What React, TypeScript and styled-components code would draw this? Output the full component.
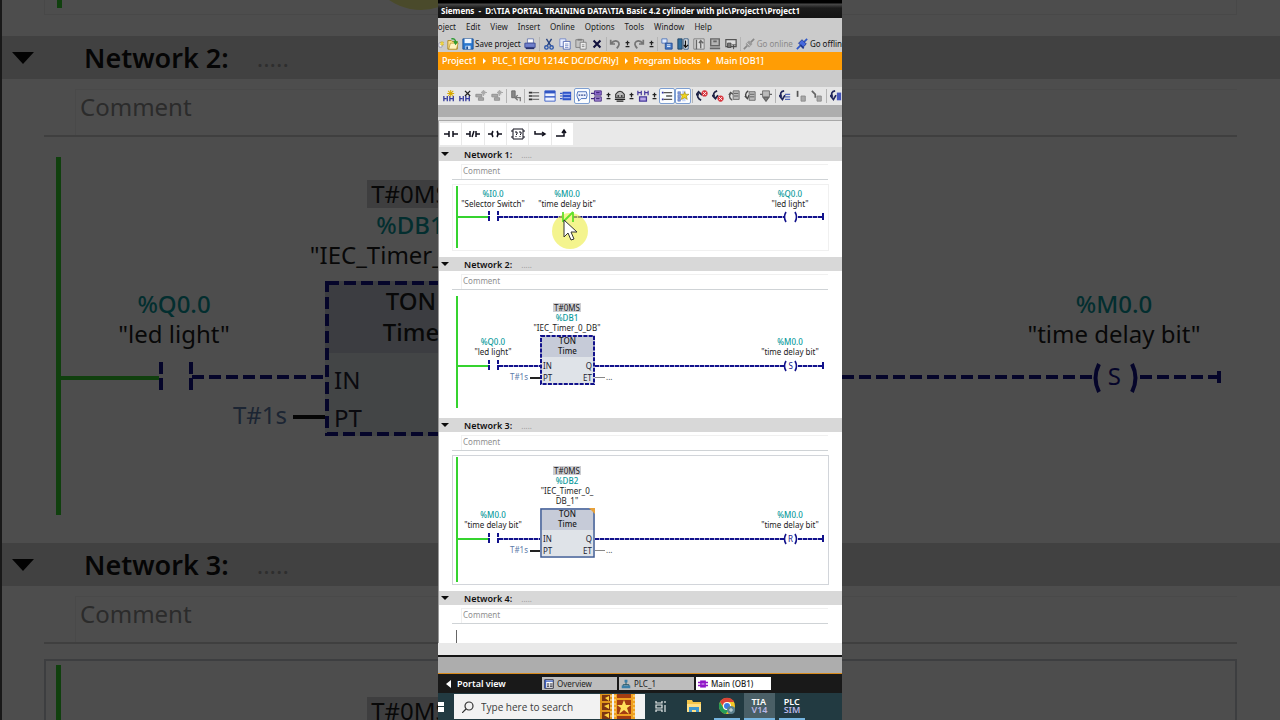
import React from "react";
import styled, { createGlobalStyle, css } from "styled-components";

const GlobalStyle = createGlobalStyle`
  *, *::before, *::after { box-sizing: border-box; }
  body {
    margin: 0;
    background: #000;
    font-family: "Noto Sans", "Open Sans", sans-serif;
    color: #1c1c1c;
  }
  button, input { font: inherit; color: inherit; border: 0; padding: 0; margin: 0; background: none; }
`;

const navy = "#12128c";
const green = "#35d32f";
const teal = "#0a9a9c";

/* ---------- page frame ---------- */

const Page = styled.div`
  display: grid;
  grid-template-columns: minmax(0, 1fr) minmax(404px, 30vw) minmax(0, 1fr);
  min-height: 100vh;
`;

const Backdrop = styled.aside<{ $edge?: boolean }>`
  display: flex;
  flex-direction: column;
  overflow: hidden;
  background: #fff;
  opacity: 0.3;
  ${(p) => p.$edge && css`border-left: 2px solid #555;`}
`;

const Screen = styled.main`
  display: flex;
  flex-direction: column;
  min-width: 0;
  overflow: hidden;
  background: #e9e9e9;
`;

/* ---------- top bars ---------- */

const TitleBar = styled.header`
  height: 18px;
  padding: 4px 3px 0;
  background: linear-gradient(#000 0 3px, #4a4a4a 4px, #1b1b1b 8px, #141414);
  color: #fff;
  font-size: 8px;
  line-height: 14px;
  font-weight: 700;
  white-space: pre;
`;

const MenuBar = styled.nav`
  display: flex;
  align-items: center;
  gap: 10px;
  height: 18px;
  background: #cbcbcb;
  font-size: 8px;
  line-height: 12px;
`;

const MenuItem = styled.button<{ $clipped?: boolean }>`
  ${(p) => p.$clipped && css`
    display: flex;
    justify-content: flex-end;
    width: 18px;
    overflow: hidden;
  `}
`;

const ToolBar = styled.div<{ $light?: boolean }>`
  display: flex;
  align-items: center;
  height: ${(p) => (p.$light ? 18 : 16)}px;
  padding-left: ${(p) => (p.$light ? 3 : 0)}px;
  overflow: hidden;
  background: ${(p) => (p.$light ? "#e6e6e6" : "#cbcbcb")};
`;

const ToolButton = styled.button<{ $w?: number; $active?: boolean }>`
  display: flex;
  flex: none;
  align-items: center;
  justify-content: center;
  width: ${(p) => p.$w ?? 16}px;
  height: 16px;
  overflow: hidden;
  ${(p) => p.$active && css`
    background: #fbfdff;
    border: 1px solid #7d9fd2;
    border-radius: 2px;
  `}
`;

const ToolText = styled.button<{ $muted?: boolean }>`
  flex: none;
  padding: 0 2px 0 1px;
  font-size: 8px;
  line-height: 14px;
  white-space: nowrap;
  color: ${(p) => (p.$muted ? "#8a8a8a" : "#111")};
`;

const Divider = styled.span`
  flex: none;
  width: 1px;
  height: 14px;
  margin: 0 1px;
  background: #b4b4b4;
`;

const Breadcrumb = styled.nav`
  display: flex;
  align-items: center;
  gap: 6px;
  height: 18px;
  padding-left: 4px;
  background: #ff9d05;
  color: #fff;
  font-size: 9px;
  line-height: 16px;
  font-weight: 500;
  a { color: inherit; text-decoration: none; white-space: nowrap; }
`;

const Strip = styled.div<{ $h: number; $bg: string }>`
  flex: none;
  height: ${(p) => p.$h}px;
  background: ${(p) => p.$bg};
`;

const Favourites = styled.div`
  display: flex;
  gap: 1px;
  width: 135px;
  height: 26px;
  padding: 2px 0 2px 1px;
  border-left: 1px solid #999;
`;

const Favourite = styled.button`
  display: flex;
  flex: 1;
  align-items: center;
  justify-content: center;
  background: #fff;
`;

/* ---------- networks ---------- */

const Networks = styled.div`
  flex: 1;
  background: #fff;
  border-left: 1px solid #999;
`;

const NetworkHead = styled.h2<{ $big?: boolean }>`
  display: flex;
  flex: none;
  align-items: center;
  margin: 0;
  white-space: nowrap;
  font-weight: 600;
  background: #d8d8d8;
  color: #111;
  ${(p) => p.$big
    ? css`height: 43px; padding-left: 10px; font-size: 27px; line-height: 40px;`
    : css`height: 14px; padding-left: 2px; font-size: 9px; line-height: 13px;`}
`;

const NetworkTitle = styled.span<{ $big?: boolean }>`
  margin-left: ${(p) => (p.$big ? 50 : 15)}px;
`;

const NetworkDots = styled.span<{ $big?: boolean }>`
  margin-left: ${(p) => (p.$big ? 28 : 9)}px;
  font-weight: 400;
  color: #999;
  font-size: ${(p) => (p.$big ? 24 : 8)}px;
`;

const CommentRow = styled.div<{ $big?: boolean; $side?: "left" | "right" }>`
  flex: none;
  border-bottom: 1px solid #cfd3d6;
  ${(p) => p.$big
    ? css`
        height: 58px;
        padding: 10px 0 0 ${p.$side === "left" ? 31 : 0}px;
        margin: 0 ${p.$side === "right" ? 43 : 0}px 15px ${p.$side === "left" ? 42 : 0}px;
        border-bottom: 2px solid #cfcfd2;
      `
    : css`height: 19px; padding: 3px 0 0 9px; margin: 0 14px 4px 13px;`}
`;

const CommentInput = styled.input<{ $big?: boolean }>`
  display: block;
  width: 100%;
  border-top: 1px solid #f0f0f0;
  border-left: 1px solid #f0f0f0;
  ${(p) => p.$big
    ? css`height: 46px; padding: 0 0 12px 4px; font-size: 24px;`
    : css`height: 15px; padding: 0 0 4px 1px; font-size: 8px;`}
  &::placeholder { color: #8f8f8f; opacity: 1; }
`;

const Canvas = styled.div<{ $h?: number; $m: string; $line?: string; $sides?: string }>`
  position: relative;
  flex: none;
  height: ${(p) => (p.$h ? `${p.$h}px` : "auto")};
  ${(p) => !p.$h && css`flex: 1 0 61px;`}
  margin: ${(p) => p.$m};
  border: 0 solid ${(p) => p.$line ?? "transparent"};
  border-width: ${(p) => p.$sides ?? "1px"};
`;

type Place = { $x?: number; $r?: number; $y: number };

const place = css<Place>`
  position: absolute;
  top: ${(p) => p.$y}px;
  ${(p) => p.$x !== undefined && css`left: ${p.$x}px;`}
  ${(p) => p.$r !== undefined && css`right: ${p.$r}px;`}
`;

const Bar = styled.i<Place & { $w?: number; $h: number; $c?: string }>`
  ${place}
  ${(p) => p.$w !== undefined && css`width: ${p.$w}px;`}
  height: ${(p) => p.$h}px;
  background: ${(p) => p.$c ?? navy};
`;

const Wire = styled.i<Place & { $w?: number; $big?: boolean }>`
  ${place}
  ${(p) => p.$w !== undefined && css`width: ${p.$w}px;`}
  height: ${(p) => (p.$big ? 4 : 2)}px;
  background: ${(p) => p.$big
    ? `repeating-linear-gradient(90deg, ${navy} 0 12px, transparent 12px 17px)`
    : `repeating-linear-gradient(90deg, ${navy} 0 4px, #a9a9d6 4px 5px)`};
`;

const Label = styled.div<Place & { $w: number; $big?: boolean }>`
  ${place}
  display: flex;
  flex-direction: column;
  align-items: center;
  width: ${(p) => p.$w}px;
  white-space: nowrap;
  font-size: ${(p) => (p.$big ? 24 : 8)}px;
  line-height: ${(p) => (p.$big ? 30 : 10)}px;
`;

const Address = styled.span`
  color: ${teal};
  font-weight: 500;
`;

const Chip = styled.span<{ $big?: boolean }>`
  padding: 0 ${(p) => (p.$big ? 4 : 1)}px;
  line-height: ${(p) => (p.$big ? 28 : 9)}px;
  margin-bottom: ${(p) => (p.$big ? 2 : 1)}px;
  background: #cdcdd1;
`;

const Pin = styled.span<Place & { $big?: boolean; $c?: string }>`
  ${place}
  font-size: ${(p) => (p.$big ? 24 : 8)}px;
  line-height: ${(p) => (p.$big ? 30 : 10)}px;
  white-space: nowrap;
  color: ${(p) => p.$c ?? "#223"};
`;

const Block = styled.div<Place & { $big?: boolean }>`
  ${place}
  width: ${(p) => (p.$big ? 172 : 55)}px;
  height: ${(p) => (p.$big ? 155 : 50)}px;
  background: #dfe3e8;
  svg { position: absolute; inset: 0; width: 100%; height: 100%; }
`;

const BlockHead = styled.div<{ $big?: boolean }>`
  height: ${(p) => (p.$big ? 72 : 22)}px;
  padding-top: ${(p) => (p.$big ? 4 : 1)}px;
  background: #c6cbd8;
  text-align: center;
  font-weight: 500;
  font-size: ${(p) => (p.$big ? 24 : 8)}px;
  line-height: ${(p) => (p.$big ? 31 : 10)}px;
`;

const CoilSvg = styled.svg<Place>`
  ${place}
  overflow: visible;
`;

const Pointer = styled.svg<Place>`
  ${place}
`;

/* ---------- bottom bars ---------- */

const PortalBar = styled.div`
  display: flex;
  align-items: center;
  flex: none;
  height: 20px;
  border-top: 1px solid #d88a1c;
  background: #191919;
`;

const PortalButton = styled.button`
  display: flex;
  align-items: center;
  gap: 6px;
  width: 104px;
  padding-left: 8px;
  color: #fff;
  font-size: 9px;
  font-weight: 600;
  line-height: 14px;
`;

const EditorTab = styled.button<{ $active?: boolean }>`
  display: flex;
  align-items: center;
  gap: 3px;
  width: 75px;
  height: 13px;
  margin-right: 2px;
  padding-left: 2px;
  font-size: 8px;
  line-height: 12px;
  background: ${(p) => (p.$active ? "#fff" : "#bdbdbd")};
  font-weight: ${(p) => (p.$active ? 500 : 400)};
`;

const TaskBar = styled.footer`
  display: flex;
  flex: none;
  height: 27px;
  background: #223a41;
`;

const StartButton = styled.button`
  display: flex;
  align-items: center;
  width: 16px;
`;

const SearchBox = styled.label`
  display: flex;
  align-items: center;
  width: 191px;
  height: 25px;
  margin: 1px 3px 0 0;
  padding-left: 8px;
  background: #f2f2f2;
  input {
    flex: 1;
    min-width: 0;
    margin-left: 7px;
    font-family: "Open Sans", "Noto Sans", sans-serif;
    font-size: 10px;
    color: #333;
  }
  input::placeholder { color: #3c3c3c; opacity: 1; }
`;

const FilmSvg = styled.svg`
  flex: none;
  margin-right: 8px;
`;

const TaskButton = styled.button<{ $open?: boolean; $active?: boolean; $w: number }>`
  display: flex;
  align-items: center;
  justify-content: center;
  width: ${(p) => p.$w}px;
  margin-right: 4px;
  background: ${(p) => (p.$active ? "#4a5f66" : "transparent")};
  border-bottom: 2px solid ${(p) => (p.$open ? "#76b5e0" : "transparent")};
  color: #fff;
`;

const TileName = styled.span<{ $soft?: boolean }>`
  display: block;
  height: 8px;
  font-size: 9px;
  font-weight: 600;
  line-height: 8px;
  text-align: left;
  color: ${(p) => (p.$soft ? "#b9b7e6" : "#fff")};
`;

/* ---------- icons ---------- */

const G = "#7b7b7b";
const art: Record<string, React.ReactNode> = {
  star: <><path d="M2 5h6v8H2z" fill="#fff" stroke="#668" /><path d="M8 1l1 3 3-1-2 3 2 3-3-1-1 3-1-3-3 1 2-3-2-3 3 1z" fill="#ffe23a" stroke="#b69500" strokeWidth=".5" /></>,
  open: <><path d="M1 3h4l1 1h6v9H1z" fill="#ffe28a" stroke="#a98218" /><path d="M2 13l2-7h9l-2 7z" fill="#fff3bf" stroke="#a98218" strokeWidth=".7" /><path d="M5 1q5-1 5 4M8 4l2 3 2-3" fill="none" stroke="#2c9b31" strokeWidth="1.6" /></>,
  save: <><path d="M1 1h12v12H1z" fill="#2a78cf" stroke="#1a4e94" /><path d="M3 1h8v5H3z" fill="#eef6ff" /><path d="M4 9h6v4H4z" fill="#cfe3fa" /><path d="M5 10h2v3H5z" fill="#1a4e94" /></>,
  print: <><path d="M4 1h7v5H4z" fill="#fff" stroke="#6677b0" /><path d="M1 6h12v5H1z" fill="#6f80cc" stroke="#3b4992" /><path d="M2 12h10" stroke="#26306d" strokeWidth="2" /></>,
  cut: <><path d="M4 1l5 8M10 1L5 9" stroke="#26427f" strokeWidth="1.6" /><circle cx="4" cy="11" r="2" fill="none" stroke="#2b55a9" strokeWidth="1.6" /><circle cx="10" cy="11" r="2" fill="none" stroke="#2b55a9" strokeWidth="1.6" /></>,
  copy: <><path d="M1 1h7v9H1z" fill="#e8eeff" stroke="#6d83c4" /><path d="M5 4h8v9H5z" fill="#fff" stroke="#4c63ad" /><path d="M7 7h4M7 9h4M7 11h4" stroke="#6d83c4" /></>,
  paste: <><path d="M1 2h9v9H1z" fill="#c3c3c3" stroke={G} /><path d="M3 1h5v2H3z" fill={G} /><path d="M6 5h7v8H6z" fill="#eee" stroke={G} /><path d="M8 8h3M8 10h3" stroke={G} /></>,
  del: <path d="M3 3l8 8M11 3L3 11" stroke="#10103c" strokeWidth="2.4" />,
  undo: <path d="M2 2v5h5M2 7q4-5 8-3 4 3-1 8" fill="none" stroke="#747474" strokeWidth="2" />,
  redo: <path d="M12 2v5H7M12 7Q8 2 4 4q-4 3 1 8" fill="none" stroke="#747474" strokeWidth="2" />,
  compile: <><path d="M1 1h6v5H1z" fill="#dfeaff" stroke="#4a70b8" /><path d="M5 6h8v7H5z" fill="#4577c4" stroke="#244c92" /><path d="M7 8h4M7 10h4" stroke="#fff" /></>,
  down: <><path d="M1 1h5v12H1z" fill="#2f6e9e" stroke="#1d3d60" /><path d="M8 1h5v12H8z" fill="#f4f4f4" stroke="#25507b" /><path d="M10 3v7M8 8l2 3 3-3" fill="none" stroke="#111" strokeWidth="1.4" /></>,
  up: <><path d="M1 1h12v12H1z" fill="#dcdcdc" stroke="#777" /><path d="M4 2v11M9 12V4M7 6l2-3 3 3" fill="none" stroke="#666" strokeWidth="1.6" /></>,
  monitor: <><path d="M2 1h10v8H2z" fill="#b5b5b5" stroke="#666" strokeWidth="1.6" /><path d="M5 4h4M1 12h12" stroke="#666" strokeWidth="2" /></>,
  runtime: <><path d="M1 2h12v8H1z" fill="#ddd" stroke="#555" strokeWidth="1.4" /><path d="M3 6h4v5H3zM8 8h5M10 8v5" fill="#777" stroke="#444" /></>,
  plugOff: <><path d="M1 13l4-4M9 5l4-4" stroke="#888" strokeWidth="2" /><path d="M3 7l4-4 4 4-4 4z" fill="#999" /><path d="M5 6l3 3" stroke="#ddd" /></>,
  plugOn: <><path d="M1 13l4-4M9 5l4-4" stroke="#2d57c8" strokeWidth="2" /><path d="M3 6l4-4 5 5-4 4z" fill="#4568dd" stroke="#1f388f" /><path d="M5 8l4 4" stroke="#1f388f" strokeWidth="2" /></>,
  netAdd: <><path d="M1 7v6M1 10h3M5 7v6M8 7v6M8 10h4M12 7v6" stroke="#333a9b" strokeWidth="1.5" fill="none" /><path d="M9 0v8M5 4h8M6 1l6 6M12 1L6 7" stroke="#d7a900" strokeWidth="1.2" /></>,
  netDel: <><path d="M1 7v6M1 10h3M5 7v6M8 7v6M8 10h4M12 7v6" stroke="#333a9b" strokeWidth="1.5" fill="none" /><path d="M7 1l6 6M13 1L7 7" stroke="#222" strokeWidth="1.5" /></>,
  rowAdd: <><path d="M1 5h7v3H1zM4 9h6v3H4z" fill="#a8a8a8" stroke="#8c8c8c" /><path d="M10 0v7M7 3h7M8 1l4 4M12 1L8 5" stroke="#aaa" strokeWidth="1.2" /></>,
  jump: <><path d="M2 1h4v8H2z" fill="#888" stroke="#666" /><path d="M6 9h6v4M6 9l3-3M6 9l3 3" stroke="#777" fill="none" strokeWidth="1.5" /></>,
  list: <><path d="M1 3h4M1 7h4M1 11h4" stroke="#333" strokeWidth="2" /><path d="M5 3h8M5 7h8M5 11h8" stroke="#777" strokeWidth="1.5" /></>,
  panel: <><path d="M1 1h12v12H1z" fill="#eef3ff" stroke="#3156c4" /><path d="M1 1h12v3H1z" fill="#3156c4" /><path d="M1 8h12" stroke="#3156c4" strokeWidth="1.6" /></>,
  rows: <><path d="M0 4h3M0 7h3M0 10h3" stroke="#3156c4" strokeWidth="1.4" /><path d="M3 2h10v10H3z" fill="#2f55c9" /><path d="M4 5h8M4 9h8" stroke="#cbd7ff" /></>,
  bubble: <><path d="M2 2h10q2 4 0 8H6l-3 3v-3H2q-2-4 0-8z" fill="#eef4ff" stroke="#3a63b4" /><path d="M3 6h2M6 6h2M9 6h2" stroke="#273e86" strokeWidth="1.6" /></>,
  operand: <><path d="M4 1h8v5H4z" fill="#9470d2" stroke="#41287c" /><path d="M4 8h8v5H4z" fill="#a78bd8" stroke="#41287c" /><path d="M0 4h4M0 10h4M6 3h4M6 10h4" stroke="#41287c" strokeWidth="1.5" /></>,
  symbol: <><path d="M2 5q5-7 10 0v4H2z" fill="#bbb" stroke="#333" strokeWidth="1.3" /><path d="M1 11h12M4 7h2M8 7h2M3 13h8" stroke="#222" strokeWidth="1.6" /></>,
  branch: <><path d="M1 1v5M1 3h4M5 1v5M9 1v5M9 3h4M13 1v5" stroke="#473a9b" strokeWidth="1.4" /><path d="M3 8h8v5H3z" fill="#b7a6e6" stroke="#473a9b" strokeWidth="1.5" /></>,
  indent: <><path d="M1 3h2M1 11h2" stroke="#33a" strokeWidth="2" /><path d="M3 3h10M6 7h7M3 11h10" stroke="#555" strokeWidth="1.5" /></>,
  favs: <><path d="M1 2h3v3H1zM1 6h3v3H1zM1 10h3v3H1z" fill="#8aa1dc" stroke="#4463b3" strokeWidth=".6" /><path d="M6 1h4v12H6z" fill="#c9d6f7" /><path d="M9 2l1 3 4 0-3 2 1 4-3-2-4 2 1-4-2-2h4z" fill="#f2d61e" stroke="#917c00" strokeWidth=".6" /></>,
  errPrev: <><path d="M6 12Q0 9 3 4M0 6l3-4 4 4" fill="none" stroke="#1c2144" strokeWidth="2" /><circle cx="10" cy="4" r="3.6" fill="#d7323b" /><path d="M8 2l4 4M12 2L8 6" stroke="#fff" /></>,
  errNext: <><path d="M6 1Q0 3 3 8M0 6l4 4 3-4" fill="none" stroke="#1c2144" strokeWidth="2" /><circle cx="10" cy="10" r="3.6" fill="#d7323b" /><path d="M8 8l4 4M12 8l-4 4" stroke="#fff" /></>,
  refPrev: <><path d="M5 12Q0 9 3 4M1 6l2-3 3 2" fill="none" stroke="#555" strokeWidth="1.6" /><path d="M6 1h7v10H6z" fill="#bbb" stroke="#666" /><path d="M7 4h5M7 7h5" stroke="#555" /></>,
  refNext: <><path d="M5 1Q0 4 3 9M1 7l3 3 2-4" fill="none" stroke="#444" strokeWidth="1.6" /><path d="M6 2h7v10H6z" fill="#bbb" stroke="#666" /><path d="M7 5h5M7 8h5" stroke="#555" /></>,
  sync: <><path d="M3 1h8v7H3z" fill="#bbb" stroke="#666" /><path d="M0 5h3M11 5h3M4 9l3 4 3-4z" stroke="#666" fill="#888" strokeWidth="1.5" /></>,
  goto: <><path d="M6 1Q0 2 3 8M0 6l4 5 3-5" fill="none" stroke="#20265c" strokeWidth="2" /><path d="M7 5h6M7 8h6M7 11h6" stroke="#5468b8" strokeWidth="1.5" /></>,
  stepA: <><path d="M3 1v7" stroke="#555" strokeWidth="2" /><path d="M7 7h5v6H7z" fill="#aaa" stroke="#888" /></>,
  stepB: <><path d="M1 1l4 4v4" stroke="#666" strokeWidth="2" fill="none" /><path d="M7 7h5v6H7z" fill="#aaa" stroke="#888" /></>,
  watch: <><path d="M6 1Q0 2 3 8M0 6l4 5 3-5" fill="none" stroke="#20265c" strokeWidth="2" /><path d="M8 3h5v9H8z" fill="#4757bb" /></>,
  updown: <path d="M7 2v7M4 5h6M4 11h6" stroke="#222" strokeWidth="2" fill="none" />,
};

const Icon = ({ name, size = 11 }: { name: string; size?: number }) => (
  <svg width={size} height={size} viewBox="0 0 14 14" fill="none" aria-hidden>{art[name]}</svg>
);

const Tool = ({ name, w, active }: { name: string; w?: number; active?: boolean }) => (
  <ToolButton $w={w} $active={active} aria-label={name}><Icon name={name} size={12} /></ToolButton>
);

const Chevron = () => <svg width="3" height="6" viewBox="0 0 3 6" aria-hidden><path d="M0 0l3 3-3 3z" fill="#fff" /></svg>;

const Triangle = ({ big }: { big?: boolean }) => (
  <svg width={big ? 22 : 8} height={big ? 12 : 4} viewBox="0 0 22 12" preserveAspectRatio="none" aria-hidden>
    <path d="M0 0h22L11 12z" fill="#0b0b0b" />
  </svg>
);

/* ---------- ladder parts ---------- */

const quoted = (s: string) => `"${s}"`;

function Tag({ x, r, y, address, name, big }: { x?: number; r?: number; y: number; address: string; name: string; big?: boolean }) {
  return (
    <Label $x={x} $r={r} $y={y} $w={big ? 220 : 76} $big={big}>
      <Address>{address}</Address>
      <span>{quoted(name)}</span>
    </Label>
  );
}

function Contact({ x, y }: { x: number; y: number }) {
  return (
    <>
      <Bar $x={x} $y={y - 5} $w={2} $h={4} /><Bar $x={x} $y={y} $w={2} $h={5} />
      <Bar $x={x + 9} $y={y - 5} $w={2} $h={4} /><Bar $x={x + 9} $y={y} $w={2} $h={5} />
    </>
  );
}

function Coil({ y, letter }: { y: number; letter?: string }) {
  return (
    <>
      <CoilSvg $r={29} $y={y - 4} width="16" height="10" viewBox="0 0 16 10" fill="none" stroke={navy} strokeWidth="1.6">
        <path d="M3 0Q0 5 3 10M12 0q3 5 0 10" />
      </CoilSvg>
      {letter && <Pin $r={35} $y={y - 4} $c={navy}>{letter}</Pin>}
      <Wire $r={5} $y={y} $w={25} />
      <Bar $r={4} $y={y - 3} $w={2} $h={7} />
    </>
  );
}

function Timer({ y, db, names, selected }: { y: number; db: string; names: string[]; selected?: boolean }) {
  return (
    <>
      <Label $x={73} $y={y - 52 - names.length * 10} $w={82}>
        <Chip>T#0MS</Chip>
        <Address>{db}</Address>
        {names.map((n) => <span key={n}>{n}</span>)}
      </Label>
      <Block $x={87} $y={y - 30}>
        <BlockHead>TON<br />Time</BlockHead>
        <svg aria-hidden>
          <rect x="1" y="1" width="53" height="48" fill="none" stroke={selected ? "#3c5a96" : navy}
            strokeWidth={selected ? 1.4 : 2} strokeDasharray={selected ? undefined : "4 1.3"} />
          {selected && <path d="M49 0h6v6z" fill="#e7a13a" />}
        </svg>
        <Pin $x={3} $y={26}>IN</Pin>
        <Pin $x={3} $y={38}>PT</Pin>
        <Pin $r={3} $y={26}>Q</Pin>
        <Pin $r={3} $y={38}>ET</Pin>
      </Block>
      <Pin $x={57} $y={y + 7} $c="#5c7aa8">T#1s</Pin>
      <Bar $x={77} $y={y + 12} $w={10} $h={2} $c="#222" />
      <Bar $x={142} $y={y + 12} $w={10} $h={1} $c="#888" />
      <Pin $x={153} $y={y + 7} $c="#444">...</Pin>
    </>
  );
}

function Network({ n, children, h, line }: { n: number; children: React.ReactNode; h: number; line?: string }) {
  return (
    <section>
      <NetworkHead><Triangle /><NetworkTitle>{`Network ${n}:`}</NetworkTitle><NetworkDots>.....</NetworkDots></NetworkHead>
      <CommentRow><CommentInput placeholder="Comment" aria-label={`Network ${n} comment`} /></CommentRow>
      <Canvas $h={h} $m="0 13px 6px 13px" $line={line}>{children}</Canvas>
    </section>
  );
}

function PowerRail({ y, h }: { y: number; h: number }) {
  return (
    <>
      <Bar $x={3} $y={1} $w={2} $h={h} $c={green} />
      <Bar $x={5} $y={y} $w={30} $h={2} $c={green} />
    </>
  );
}

function LadderEditor() {
  return (
    <Networks>
      <Network n={1} h={67} line="#f0f0f0">
        <PowerRail y={31} h={62} />
        <Tag x={2} y={4} address="%I0.0" name="Selector Switch" />
        <Contact x={35} y={31} />
        <Wire $x={46} $y={31} $w={63} />
        <Tag x={76} y={4} address="%M0.0" name="time delay bit" />
        <Wire $x={120} $y={31} $r={43} />
        <Pointer $x={98} $y={25} width="37" height="40" viewBox="0 0 37 40" aria-hidden>
          <circle cx="19" cy="21" r="18" fill="#eeee48" opacity=".62" />
          <path d="M12 2v10M22 2v10M12 12l10-10" stroke="#62e02a" strokeWidth="1.8" fill="none" />
          <path d="M13 10v17l4-4 3 7 3-1-3-7h6z" fill="#fff" stroke="#333" strokeWidth="1" />
        </Pointer>
        <Tag r={0} y={4} address="%Q0.0" name="led light" />
        <Coil y={31} />
      </Network>
      <Network n={2} h={118}>
        <PowerRail y={70} h={112} />
        <Tag x={2} y={42} address="%Q0.0" name="led light" />
        <Contact x={35} y={70} />
        <Wire $x={46} $y={70} $w={41} />
        <Timer y={70} db="%DB1" names={[quoted("IEC_Timer_0_DB")]} />
        <Wire $x={142} $y={70} $r={43} />
        <Tag r={0} y={42} address="%M0.0" name="time delay bit" />
        <Coil y={70} letter="S" />
      </Network>
      <Network n={3} h={130} line="#d2d5da">
        <PowerRail y={82} h={125} />
        <Tag x={2} y={54} address="%M0.0" name="time delay bit" />
        <Contact x={35} y={82} />
        <Wire $x={46} $y={82} $w={41} />
        <Timer y={82} db="%DB2" names={['"IEC_Timer_0_', 'DB_1"']} selected />
        <Wire $x={142} $y={82} $r={43} />
        <Tag r={0} y={54} address="%M0.0" name="time delay bit" />
        <Coil y={82} letter="R" />
      </Network>
      <section>
        <NetworkHead><Triangle /><NetworkTitle>Network 4:</NetworkTitle><NetworkDots>.....</NetworkDots></NetworkHead>
        <CommentRow><CommentInput placeholder="Comment" aria-label="Network 4 comment" /></CommentRow>
        <Canvas $h={15} $m="0 13px"><Bar $x={3} $y={1} $w={1} $h={13} $c="#666" /></Canvas>
      </section>
    </Networks>
  );
}

/* ---------- enlarged backdrops ---------- */

function BackdropLeft() {
  return (
    <Backdrop $edge aria-hidden>
      <Canvas $h={15} $m="0 0 21px 42px" $line="#eee" $sides="0 0 1px 1px">
        <Bar $x={12} $y={0} $w={5} $h={8} $c={green} />
        <Pointer $x={319} $y={0} width="114" height="12" viewBox="0 102 114 12"><circle cx="57" cy="56" r="56" fill="#eeee48" opacity=".62" /></Pointer>
      </Canvas>
      <NetworkHead $big><Triangle big /><NetworkTitle $big>Network 2:</NetworkTitle><NetworkDots $big>.....</NetworkDots></NetworkHead>
      <CommentRow $big $side="left"><CommentInput $big placeholder="Comment" /></CommentRow>
      <Canvas $h={374} $m="0 0 17px 42px" $sides="0">
        <Bar $x={12} $y={5} $w={5} $h={358} $c={green} />
        <Bar $x={17} $y={224} $w={98} $h={4} $c={green} />
        <Tag big x={20} y={137} address="%Q0.0" name="led light" />
        <Bar $x={115} $y={210} $w={4} $h={12} /><Bar $x={115} $y={226} $w={4} $h={12} />
        <Bar $x={145} $y={210} $w={4} $h={12} /><Bar $x={145} $y={226} $w={4} $h={12} />
        <Wire $big $x={148} $y={223} $w={133} />
        <Label $big $x={256} $y={28} $w={220}>
          <Chip $big>T#0MS</Chip>
          <Address>%DB1</Address>
          <span>{quoted("IEC_Timer_0_DB")}</span>
        </Label>
        <Block $big $x={281} $y={129}>
          <BlockHead $big>TON<br />Time</BlockHead>
          <svg><rect x="2" y="2" width="168" height="151" fill="none" stroke={navy} strokeWidth="4" strokeDasharray="12 5" /></svg>
          <Pin $big $x={9} $y={84}>IN</Pin>
          <Pin $big $x={9} $y={122}>PT</Pin>
        </Block>
        <Pin $big $x={189} $y={248} $c="#5c7aa8">T#1s</Pin>
        <Bar $x={249} $y={263} $w={32} $h={4} $c="#111" />
      </Canvas>
      <NetworkHead $big><Triangle big /><NetworkTitle $big>Network 3:</NetworkTitle><NetworkDots $big>.....</NetworkDots></NetworkHead>
      <CommentRow $big $side="left"><CommentInput $big placeholder="Comment" /></CommentRow>
      <Canvas $m="0 0 0 42px" $line="#c9ccd4" $sides="2px 0 0 2px">
        <Bar $x={10} $y={4} $w={5} $h={56} $c={green} />
        <Label $big $x={254} $y={36} $w={220}><Chip $big>T#0MS</Chip></Label>
      </Canvas>
    </Backdrop>
  );
}

function BackdropRight() {
  return (
    <Backdrop aria-hidden>
      <Canvas $h={15} $m="0 43px 21px 0" $line="#eee" $sides="0 1px 1px 0" />
      <NetworkHead $big />
      <CommentRow $big $side="right"><CommentInput $big /></CommentRow>
      <Canvas $h={374} $m="0 43px 17px 0" $sides="0">
        <Tag big r={13} y={137} address="%M0.0" name="time delay bit" />
        <Wire $big $x={0} $y={223} $r={145} />
        <CoilSvg $r={98} $y={211} width="46" height="30" viewBox="0 0 46 30" fill="none" stroke={navy} strokeWidth="4">
          <path d="M6 1Q-1 15 6 29M39 1q7 14 0 28" />
        </CoilSvg>
        <Pin $big $r={116} $y={209} $c={navy}>S</Pin>
        <Wire $big $r={19} $y={223} $w={78} />
        <Bar $r={16} $y={219} $w={4} $h={12} />
      </Canvas>
      <NetworkHead $big />
      <CommentRow $big $side="right"><CommentInput $big /></CommentRow>
      <Canvas $m="0 43px 0 0" $line="#c9ccd4" $sides="2px 2px 0 0" />
    </Backdrop>
  );
}

/* ---------- application ---------- */

const favourites = [
  <path d="M0 6h5M5 3v6M9 3v6M9 6h5" />,
  <path d="M0 6h4M4 3v6M10 3v6M10 6h4M6 9l2-6" />,
  <path d="M0 6h4M5 3q-2 3 0 6M9 3q2 3 0 6M10 6h4" />,
  <><path d="M2 1h10v10H2zM0 3h2M0 9h2M12 3h2M12 9h2" strokeWidth="1" /><path d="M4 4h2v2l-1 1M5 8v1M8 4h2v2l-1 1M9 8v1" strokeWidth="1" /></>,
  <path d="M2 3v3h9M9 4l3 2-3 2" />,
  <path d="M1 8h8V3M7 5l2-3 2 3" />,
];

const Film = () => (
  <FilmSvg width="38" height="25" viewBox="0 0 38 25" aria-hidden>
    <path d="M1 0h12v25H1z" fill="#e0961b" /><path d="M15 0h21v25H15z" fill="#f0a11f" />
    <path d="M3 1h8v6H3zM3 9h8v7H3zM3 18h8v7H3z" fill="#7c3512" />
    <path d="M18 0h14v4H18zM18 6h14v14H18zM18 22h14v3H18z" fill="#a33d12" />
    <path d="M25 6l2 5h5l-4 3 2 6-5-4-5 4 2-6-4-3h5z" fill="#ffe05a" />
    <path d="M10 2l-4 2 4 3zM10 10l-5 2 5 3zM10 19l-5 2 5 3z" fill="#ffd23f" />
    <path d="M16 1v24M35 1v24M12 1v24" stroke="#ffe9a8" strokeDasharray="2 2" />
  </FilmSvg>
);

export default function App() {
  return (
    <Page>
      <GlobalStyle />
      <BackdropLeft />
      <Screen>
        <TitleBar>{"Siemens  -  D:\\TIA PORTAL TRAINING DATA\\TIA Basic 4.2 cylinder with plc\\Project1\\Project1"}</TitleBar>
        <MenuBar>
          <MenuItem $clipped>Project</MenuItem>
          {["Edit", "View", "Insert", "Online", "Options", "Tools", "Window", "Help"].map((m) => <MenuItem key={m}>{m}</MenuItem>)}
        </MenuBar>
        <ToolBar>
          <Tool name="star" w={7} /><Tool name="open" /><Tool name="save" w={13} />
          <ToolText>Save project</ToolText>
          <Tool name="print" w={15} /><Divider />
          <Tool name="cut" /><Tool name="copy" /><Tool name="paste" /><Tool name="del" /><Divider />
          <Tool name="undo" w={15} /><Tool name="updown" w={9} /><Tool name="redo" w={15} /><Tool name="updown" w={9} /><Divider />
          <Tool name="compile" /><Tool name="down" /><Tool name="up" /><Tool name="monitor" /><Tool name="runtime" /><Divider />
          <Tool name="plugOff" w={14} /><ToolText $muted>Go online</ToolText>
          <Tool name="plugOn" w={14} /><ToolText>Go offline</ToolText>
        </ToolBar>
        <Breadcrumb>
          <a href="#project">Project1</a><Chevron />
          <a href="#plc">PLC_1 [CPU 1214C DC/DC/Rly]</a><Chevron />
          <a href="#blocks">Program blocks</a><Chevron />
          <a href="#main">Main [OB1]</a>
        </Breadcrumb>
        <Strip $h={17} $bg="#cbcbcb" />
        <ToolBar $light>
          <Tool name="netAdd" /><Tool name="netDel" /><Tool name="rowAdd" /><Tool name="rowAdd" /><Divider />
          <Tool name="jump" w={15} /><Divider />
          <Tool name="list" /><Tool name="panel" /><Tool name="rows" /><Tool name="bubble" active />
          <Tool name="operand" w={14} /><Tool name="updown" w={9} />
          <Tool name="symbol" w={14} /><Tool name="updown" w={9} />
          <Tool name="branch" w={14} /><Tool name="updown" w={9} />
          <Tool name="indent" active /><Tool name="favs" active /><Divider />
          <Tool name="errPrev" /><Tool name="errNext" /><Tool name="refPrev" /><Tool name="refNext" /><Tool name="sync" /><Divider />
          <Tool name="goto" /><Tool name="stepA" /><Tool name="stepB" /><Divider />
          <Tool name="watch" />
        </ToolBar>
        <Strip $h={12} $bg="#adadad" />
        <Strip $h={4} $bg="linear-gradient(#d8d8d8 0 3px, #a8a8a8 3px)" />
        <Favourites>
          {favourites.map((f, i) => (
            <Favourite key={i} aria-label={`Instruction ${i + 1}`}>
              <svg width="14" height="12" viewBox="0 0 14 12" fill="none" stroke="#10101c" strokeWidth="1.5">{f}</svg>
            </Favourite>
          ))}
        </Favourites>
        <LadderEditor />
        <Strip $h={12} $bg="#e9e9e9" />
        <Strip $h={2} $bg="#141414" />
        <Strip $h={16} $bg="#adadad" />
        <PortalBar>
          <PortalButton><svg width="5" height="8" viewBox="0 0 5 8" aria-hidden><path d="M5 0v8L0 4z" fill="#fff" /></svg>Portal view</PortalButton>
          <EditorTab>
            <svg width="10" height="10" viewBox="0 0 14 14" fill="none" aria-hidden><path d="M1 1h12v12H1z" fill="#fff" stroke="#334" strokeWidth="1.4" /><path d="M1 3h12M2 1v12" stroke="#3b5ec0" strokeWidth="2" /><path d="M4 7h3M8 7h4M4 10h3M8 10h4" stroke="#223" strokeWidth="1.5" /></svg>
            Overview
          </EditorTab>
          <EditorTab>
            <svg width="10" height="10" viewBox="0 0 14 14" fill="none" aria-hidden><path d="M7 4v4M3 11V8h8v3" stroke="#256" strokeWidth="1.4" /><path d="M5 1h4v4H5zM1 9h4v4H1zM9 9h4v4H9zM5 9h4v4H5z" fill="#3a7fa8" /></svg>
            PLC_1
          </EditorTab>
          <EditorTab $active>
            <svg width="10" height="10" viewBox="0 0 14 14" fill="none" aria-hidden><path d="M3 2h8v10H3z" fill="#9016c8" /><path d="M0 5h14M0 9h14" stroke="#9016c8" strokeWidth="2" /><path d="M5 7h4" stroke="#fff" strokeWidth="1" /></svg>
            Main (OB1)
          </EditorTab>
        </PortalBar>
        <TaskBar>
          <StartButton aria-label="Start"><svg width="6" height="10" viewBox="0 0 6 10"><path d="M0 0h6v4H0zM0 5h6v5H0z" fill="#fff" /></svg></StartButton>
          <SearchBox>
            <svg width="12" height="12" viewBox="0 0 12 12" fill="none" stroke="#333" strokeWidth="1.2" aria-hidden><circle cx="7" cy="5" r="4" /><path d="M4 8l-4 4" /></svg>
            <input placeholder="Type here to search" aria-label="Type here to search" />
            <Film />
          </SearchBox>
          <TaskButton $w={26} aria-label="Task view">
            <svg width="12" height="12" viewBox="0 0 12 12" fill="none" stroke="#e6eaea" strokeWidth="1.2"><path d="M1 1v2h6V1M1 5h6v3H1zM1 12v-2h6v2M10 1v2M10 5v7" /></svg>
          </TaskButton>
          <TaskButton $w={32} aria-label="File Explorer">
            <svg width="16" height="14" viewBox="0 0 16 14"><path d="M1 1h5l1 2h8v10H1z" fill="#f4c54a" /><path d="M1 5h14v8H1z" fill="#ffdf85" /><path d="M3 8h10v5h-3v-2H6v2H3z" fill="#3f97cf" /></svg>
          </TaskButton>
          <TaskButton $w={26} $open aria-label="Chrome">
            <svg width="18" height="18" viewBox="0 0 18 18"><circle cx="9" cy="9" r="8" fill="#f6c927" /><path d="M2 5a8 8 0 0 1 14 0H9L6 10z" fill="#dc4437" /><path d="M2 5l4 7 4 1-2 4A8 8 0 0 1 2 5z" fill="#249e58" /><circle cx="9" cy="9" r="4" fill="#fff" /><circle cx="9" cy="9" r="3" fill="#3b7de0" /><circle cx="13" cy="13" r="4" fill="#5b8290" /><path d="M11 13h4M13 11v4" stroke="#cfe0e4" /></svg>
          </TaskButton>
          <TaskButton $w={31} $open $active><span><TileName>TIA</TileName><TileName $soft>V14</TileName></span></TaskButton>
          <TaskButton $w={26} $open><span><TileName>PLC</TileName><TileName $soft>SIM</TileName></span></TaskButton>
        </TaskBar>
      </Screen>
      <BackdropRight />
    </Page>
  );
}
